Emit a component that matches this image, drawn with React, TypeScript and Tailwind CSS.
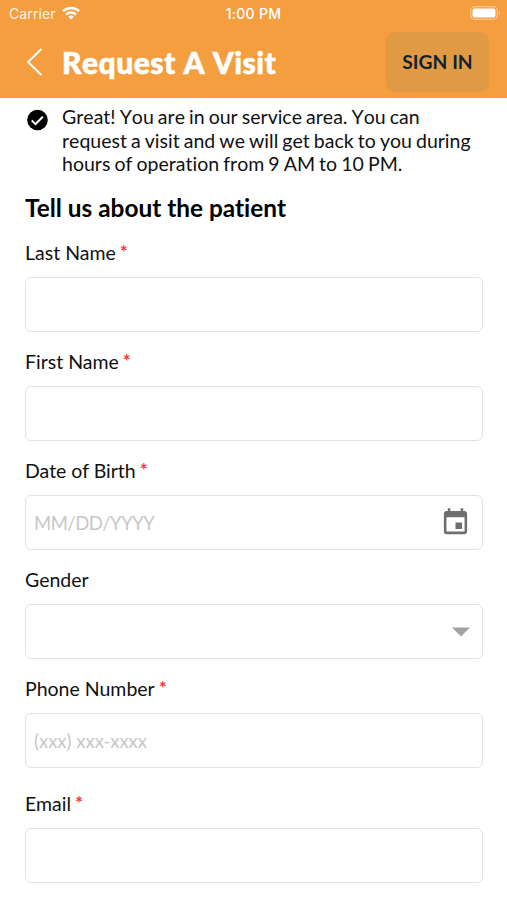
import { ReactNode } from "react";
import { MdEvent } from "react-icons/md";

interface IField {
  label: string;
  required?: boolean;
  placeholder?: string;
  placeholderClass?: string;
  icon?: ReactNode;
  className?: string;
}

const fields: Array<IField> = [
  { label: "Last Name", required: true, className: "h-[109px]" },
  { label: "First Name", required: true, className: "h-[109px]" },
  {
    label: "Date of Birth",
    required: true,
    placeholder: "MM/DD/YYYY",
    placeholderClass: "tracking-[-0.5px]",
    className: "h-[109px]",
    icon: <MdEvent className="mr-[11px] size-[31px] text-[#6e6e6e]" />,
  },
  {
    label: "Gender",
    className: "h-[109px]",
    icon: (
      <svg className="mr-[12px] h-[10px] w-[18px]" viewBox="0 0 18 10">
        <path d="M0 0.5h18l-9 9z" fill="#a3a3a3" />
      </svg>
    ),
  },
  { label: "Phone Number", required: true, placeholder: "(xxx) xxx-xxxx", className: "h-[115px]" },
  { label: "Email", required: true, className: "h-[109px]" },
];

function StatusBar() {
  return (
    <div className="grid h-[27px] grid-cols-3 items-center px-[9px] font-['Inter',sans-serif] text-[14px] text-white">
      <div className="flex items-center gap-[6px] text-[#fff3e4]">
        <span className="tracking-[0.1px]">Carrier</span>
        <svg className="h-[14px] w-[18px] -translate-y-px" viewBox="0 0 18 14" fill="none" stroke="#fff" strokeWidth="2.5">
          <path d="M1 5.1a11.6 11.6 0 0 1 16 0" />
          <path d="M4 8.6a7.2 7.2 0 0 1 10 0" />
          <path d="M9 13.6l-2.7-2.8a4 4 0 0 1 5.4 0z" fill="#fff" stroke="none" />
        </svg>
      </div>
      <span className="text-center font-medium tracking-[0.3px]">1:00 PM</span>
      <svg className="mr-[-3px] h-[14px] w-[31px] -translate-y-px justify-self-end" viewBox="0 0 31 14" fill="none">
        <rect x="0.7" y="0.7" width="26.6" height="12.6" rx="3.8" stroke="#f9c994" strokeWidth="1.2" />
        <rect x="2.6" y="2.4" width="22.8" height="9.2" rx="2" fill="#fff" />
        <path d="M29 4.8c1.6.7 1.6 3.7 0 4.4z" fill="#f9c994" />
      </svg>
    </div>
  );
}

function Header() {
  return (
    <header className="h-[98px] bg-[#f49e40]">
      <StatusBar />
      <div className="flex h-[70px] items-center pr-[18px] pl-[26px]">
        <svg className="h-[30px] w-[18px]" viewBox="0 0 18 30" fill="none" stroke="#fff" strokeWidth="2">
          <path d="M15.5 2L2 15l13.5 13" />
        </svg>
        <h1 className="ml-[18px] text-[30px] leading-9 font-black tracking-[0.5px] whitespace-nowrap text-white [font-kerning:none] [-webkit-text-stroke:0.6px_#fff]">
          Request A Visit
        </h1>
        <button className="ml-auto h-[60px] w-[103px] rounded-[9px] bg-[#df9a43] text-[19.3px] font-bold text-[#141f33]">
          SIGN IN
        </button>
      </div>
    </header>
  );
}

function Field({ label, required, placeholder, placeholderClass = "", icon, className }: IField) {
  return (
    <div className={className}>
      <label className="flex h-[36px] text-[19.5px] leading-[23px]">
        {label}
        {required && <span className="mt-[-1px] ml-[4px] text-[19px] font-bold text-[#f5383c]">*</span>}
      </label>
      <div className="flex h-[55px] items-center rounded-[6px] border border-[#e2e2e2] pl-2">
        <span className={`flex-1 pt-[2px] text-[18.5px] text-[#c7c7c7] ${placeholderClass}`}>{placeholder}</span>
        {icon}
      </div>
    </div>
  );
}

export default function App() {
  return (
    <div className="h-[900px] w-full overflow-hidden bg-white font-['Lato',sans-serif] text-[#111] [font-variant-ligatures:none]">
      <Header />
      <main className="pr-[24px] pl-[25px]">
        <div className="flex pt-[7px]">
          <svg className="mt-[4px] ml-[1px] size-[22px] shrink-0" viewBox="0 0 22 22" fill="none">
            <circle cx="11.5" cy="11" r="10.3" fill="#000" />
            <path d="M5.8 11.5l3.7 3.6 7.3-7.4" stroke="#fff" strokeWidth="2" />
          </svg>
          <p className="ml-[14px] text-[19.5px] leading-[23.5px] [word-spacing:-0.9px] whitespace-nowrap [font-kerning:none]">
            Great! You are in our service area. You can
            <br />
            request a visit and we will get back to you during
            <br />
            hours of operation from 9 AM to 10 PM.
          </p>
        </div>
        <h2 className="mt-[17.7px] text-[24.4px] leading-[30px] font-bold text-black">Tell us about the patient</h2>
        <div className="mt-[18px]">
          {fields.map((item) => (
            <Field key={item.label} {...item} />
          ))}
        </div>
      </main>
    </div>
  );
}
